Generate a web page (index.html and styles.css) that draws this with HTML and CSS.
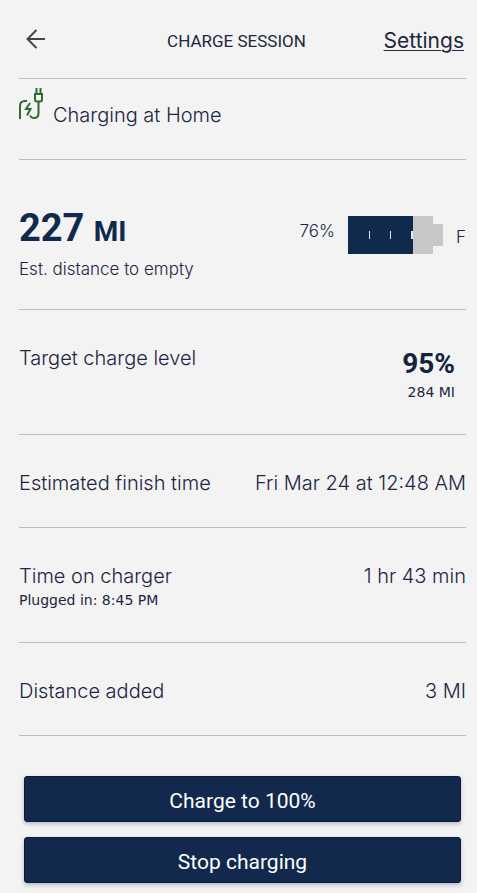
FILE: index.html
```html
<!DOCTYPE html>
<html lang="en">
<head>
<meta charset="utf-8">
<meta name="viewport" content="width=device-width, initial-scale=1">
<title>Charge session</title>
<link rel="stylesheet" href="styles.css">
</head>
<body>
<header class="topbar">
  <button class="back" type="button" aria-label="Back">
    <svg width="20" height="20" viewBox="0 0 20 20" aria-hidden="true"><path d="M19 10H2M10.500 1L1.500 10l9 9"/></svg>
  </button>
  <h1 class="title">CHARGE SESSION</h1>
  <a class="settings" href="#settings">Settings</a>
</header>
<main>
  <section class="row location">
    <svg class="plug" width="26" height="34" viewBox="0 0 26 34" aria-hidden="true"><path d="M1 32V19q0-5 5-5h2M17.500 1v6M21.500 1v6M15 7h9M16 7v5.500q0 2 2 2h3q2 0 2-2V7M19.500 15v11q0 5-4.500 5-3 0-4-2.500"/><path d="M11 16L7 22h4.500L8 28.500"/></svg>
    <span class="label">Charging at Home</span>
  </section>
  <section class="row range">
    <div>
      <div class="distance">227 <span class="unit">MI</span></div>
      <div class="note">Est. distance to empty</div>
    </div>
    <div class="gauge">
      <span class="percent">76%</span>
      <svg class="battery" width="95" height="38" viewBox="0 0 95 38" role="img" aria-label="Battery 76%"><path fill="#c7c7c9" d="M64 0h21v8h10v22H85v8H64z"/><path fill="#102a4e" d="M0 0h65v38H0z"/><path fill="#e5e8ed" d="M21 15h1v8h-1zM42 15h1v8h-1zM63 15h2v8h-2z"/></svg>
      <span class="full">F</span>
    </div>
  </section>
  <section class="row">
    <span class="label">Target charge level</span>
    <div class="level">
      <div class="goal">95%</div>
      <div class="small">284 MI</div>
    </div>
  </section>
  <section class="row">
    <span class="label">Estimated finish time</span>
    <span class="label">Fri Mar 24 at 12:48 AM</span>
  </section>
  <section class="row charger">
    <div>
      <div class="label">Time on charger</div>
      <div class="small">Plugged in: 8:45 PM</div>
    </div>
    <span class="label">1 hr 43 min</span>
  </section>
  <section class="row">
    <span class="label">Distance added</span>
    <span class="label">3 MI</span>
  </section>
  <div class="actions">
    <button class="action" type="button">Charge to 100%</button>
    <button class="action" type="button">Stop charging</button>
  </div>
</main>
</body>
</html>
```
FILE: styles.css
```css
* { box-sizing: border-box; }
body {
  margin: 0;
  padding: 0 11px 0 19px;
  background: #f3f3f3;
  color: #20263f;
  font-family: Inter, "Liberation Sans", sans-serif;
  font-weight: 300;
}
.topbar {
  display: grid;
  grid-template-columns: 1fr auto 1fr;
  align-items: center;
  height: 79px;
  border-bottom: 1px solid #bdbdbf;
}
.back {
  justify-self: start;
  display: flex;
  margin: 0 0 0 7px;
  padding: 0;
  border: 0;
  background: none;
}
.back svg {
  fill: none;
  stroke: #444448;
  stroke-width: 2;
}
.title {
  margin: 4px 12px 0 0;
  font: 400 17px/24px Roboto, sans-serif;
}
.settings {
  justify-self: end;
  margin: 4px 2px 0 0;
  color: inherit;
  font-size: 21px;
  font-weight: 400;
  line-height: 24px;
  text-decoration-thickness: 1px;
  text-underline-offset: 2px;
}
.row {
  display: flex;
  justify-content: space-between;
  align-items: flex-start;
  padding: 36px 0 32px;
  border-bottom: 1px solid #bdbdbf;
}
.label {
  font-size: 20px;
  line-height: 24px;
}
.location {
  justify-content: flex-start;
  gap: 8px;
  padding: 8px 0 32px;
}
.location .label { margin-top: 16px; }
.plug {
  fill: none;
  stroke: #2f6b35;
  stroke-width: 2;
}
.range { padding: 44px 0 28px; }
.distance {
  color: #102a4e;
  font: 700 38px/48px Roboto, sans-serif;
}
.unit { font-size: 28px; }
.note {
  margin-top: 1px;
  font-size: 17px;
  line-height: 24px;
}
.gauge {
  display: flex;
  align-items: center;
  gap: 13px;
  margin-top: 12px;
}
.percent {
  margin-bottom: 8px;
  font-size: 17px;
}
.full {
  margin-top: 4px;
  font-size: 17px;
}
.level {
  padding: 0 11px 0 0;
  text-align: right;
}
.goal {
  color: #13233f;
  font: 700 28px/36px Roboto, sans-serif;
}
.small {
  font: 400 14px/20px "DejaVu Sans", sans-serif;
}
.charger .small { line-height: 24px; }
.charger { padding-bottom: 30px; }
.actions {
  display: grid;
  gap: 15px;
  padding: 40px 5px 11px 5px;
}
.action {
  height: 46px;
  padding: 4px 0 0;
  border: 1px solid #0a1c38;
  border-radius: 3px;
  background: #12294d;
  box-shadow: 0 2px 4px #b4b6c4;
  color: #fff;
  font: 400 21px/28px Roboto, sans-serif;
}
```
